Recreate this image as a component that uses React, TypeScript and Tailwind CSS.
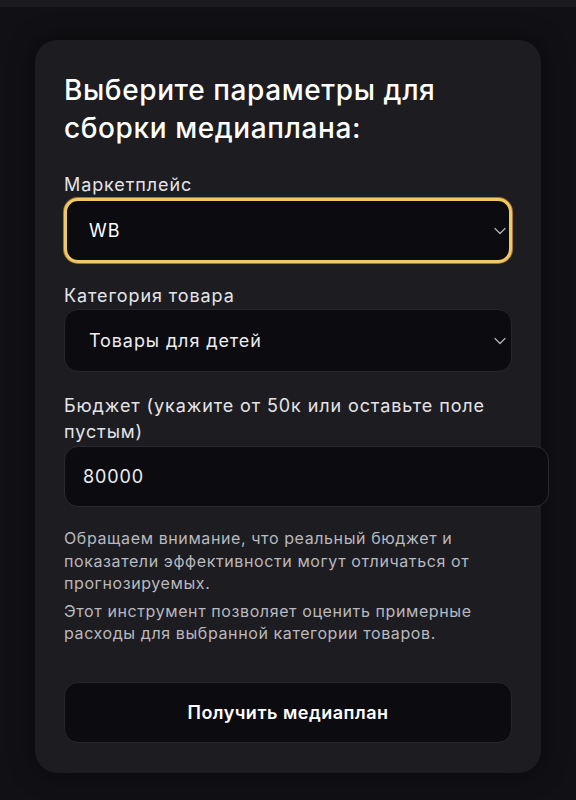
import React from 'react';

function Chevron() {
  return (
    <svg width="12" height="8" viewBox="0 0 12 8" fill="none" className="shrink-0">
      <path d="M1 1.5L6 6.5L11 1.5" stroke="#b5b5bb" strokeWidth="1.2" strokeLinecap="round" strokeLinejoin="round" />
    </svg>
  );
}

export default function App() {
  return (
    <div
      className="min-h-[800px] w-[576px] bg-[#111115] text-white"
      style={{ fontFamily: 'Inter, "Noto Sans", sans-serif' }}
    >
      <div className="h-[7px] bg-[#1b1b1f]" />
      <div className="pt-[33px] pl-[35px]">
        <div className="w-[506px] rounded-[22px] bg-[#1c1c21] px-[29px] pt-[31px] pb-[30px] shadow-[0_0_24px_rgba(0,0,0,0.5)]">
          <h1 className="text-[28px] leading-[38px] font-medium tracking-[0.6px]">
            Выберите параметры для
            <br />
            сборки медиаплана:
          </h1>

          <label className="mt-[26px] block text-[18px] leading-[24px] tracking-[0.9px] text-[#e4e4e8]">Маркетплейс</label>
          <div className="mt-[1px] flex h-[65px] items-center justify-between rounded-[14px] border-[3px] border-[#efc968] bg-[#0c0b10] pl-[22px] pr-[3px] shadow-[0_0_0_1px_#a7782c]">
            <span className="text-[18px] tracking-[0.9px]">WB</span>
            <Chevron />
          </div>

          <label className="mt-[21px] block text-[18px] leading-[24px] tracking-[0.9px] text-[#e4e4e8]">Категория товара</label>
          <div className="mt-[1px] flex h-[63px] items-center justify-between rounded-[14px] border border-[#26262c] bg-[#0c0b10] pl-[24px] pr-[5px]">
            <span className="text-[18px] tracking-[0.9px] text-[#ededf0]">Товары для детей</span>
            <Chevron />
          </div>

          <label className="mt-[21px] block text-[18px] leading-[26px] tracking-[0.9px] text-[#e4e4e8]">
            Бюджет (укажите от 50к или оставьте поле пустым)
          </label>
          <div className="mt-[1px] flex h-[61px] w-[485px] items-center rounded-[14px] border border-[#2a2a30] bg-[#0c0b10] pl-[18px]">
            <span className="text-[18px] tracking-[0.9px] text-[#ededf0]">80000</span>
          </div>

          <p className="mt-[20px] text-[16px] leading-[22.5px] tracking-[0.6px] text-[#b9b9bf]">
            Обращаем внимание, что реальный бюджет и показатели эффективности могут отличаться от прогнозируемых.
          </p>
          <p className="mt-[5px] text-[16px] leading-[22.5px] tracking-[0.6px] text-[#b9b9bf]">
            Этот инструмент позволяет оценить примерные расходы для выбранной категории товаров.
          </p>

          <button className="mt-[37px] flex h-[61px] w-full items-center justify-center rounded-[14px] border border-[#26262c] bg-[#0c0b10] text-[18px] font-semibold tracking-[0.5px] text-white">
            Получить медиаплан
          </button>
        </div>
      </div>
    </div>
  );
}
